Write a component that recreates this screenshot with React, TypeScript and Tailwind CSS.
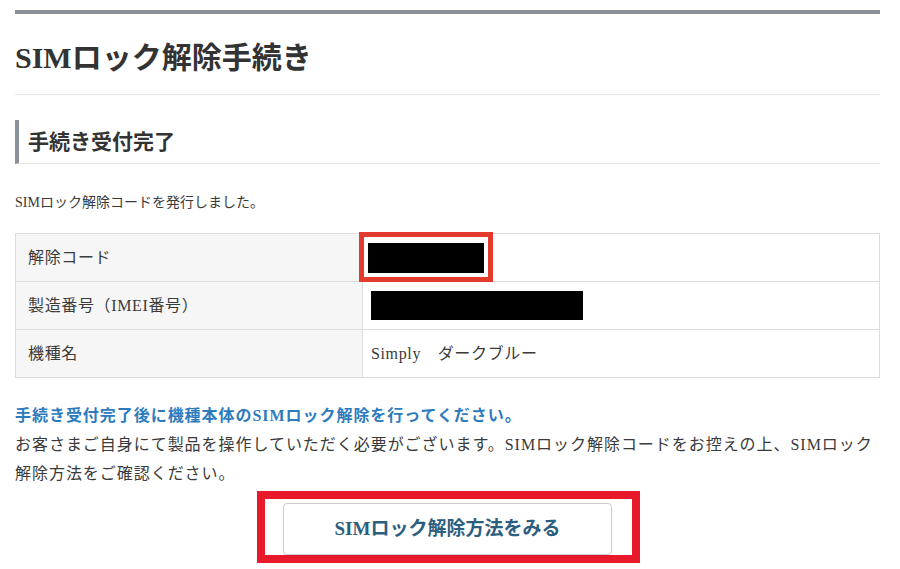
import React from 'react';

const rows = [
  { label: '解除コード', kind: 'code' },
  { label: '製造番号（IMEI番号）', kind: 'imei' },
  { label: '機種名', kind: 'text', value: 'Simply　ダークブルー' },
];

export default function App() {
  return (
    <div className="min-h-[569px] bg-white font-['Liberation_Serif','Noto_Sans_CJK_JP',serif] text-[#3a3a3a]">
      <div className="ml-[15px] w-[865px] pt-[10px]">
        {/* top rule */}
        <div className="h-[4px] bg-[#8b9198]" />

        {/* page title */}
        <h1 className="flex h-[81px] items-center border-b border-[#e5e5e5] pt-[6px] text-[30px] font-bold text-[#333]">
          SIMロック解除手続き
        </h1>

        {/* section heading */}
        <h2 className="mt-[25px] flex h-[44px] items-center border-b border-l-4 border-b-[#e2e2e2] border-l-[#8b9198] pl-[9px] pt-[3px] text-[21px] font-bold text-[#333]">
          手続き受付完了
        </h2>

        <p className="mt-[29px] text-[14px] leading-[20px]">SIMロック解除コードを発行しました。</p>

        {/* result table */}
        <table className="mt-[20px] w-full border-collapse text-[16px] tracking-[0.04em]">
          <tbody>
            {rows.map(row => (
              <tr key={row.label} className="h-[48px]">
                <td className="w-[347px] border border-[#dddddd] bg-[#f6f6f6] pl-[12px]">{row.label}</td>
                <td className="relative border border-[#dddddd] pl-[8px]">
                  {row.kind === 'code' && (
                    <>
                      <div className="ml-[-3px] h-[30px] w-[116px] bg-black" />
                      <div className="absolute left-[-4px] top-[-2px] h-[50px] w-[134px] border-[5px] border-[#e23a2c]" />
                    </>
                  )}
                  {row.kind === 'imei' && <div className="h-[29px] w-[212px] bg-black" />}
                  {row.kind === 'text' && <span>{row.value}</span>}
                </td>
              </tr>
            ))}
          </tbody>
        </table>

        {/* notes */}
        <div className="mt-[23px] text-[16px] leading-[29px] tracking-[0.06em]">
          <p className="font-bold text-[#2d7bbd]">手続き受付完了後に機種本体のSIMロック解除を行ってください。</p>
          <p className="whitespace-nowrap">
            お客さまご自身にて製品を操作していただく必要がございます。SIMロック解除コードをお控えの上、SIMロック
            <br />
            解除方法をご確認ください。
          </p>
        </div>

        {/* button with highlight */}
        <div className="ml-[242px] mt-[3px] h-[72px] w-[383px] border-[8px] border-[#e8192b] pl-[18px] pt-[4px]">
          <button className="flex h-[52px] w-[329px] items-center justify-center rounded-[4px] border border-[#cfcfcf] bg-white text-[19px] font-bold text-[#2c5e80] shadow-[0_1px_2px_rgba(0,0,0,0.08)]">
            SIMロック解除方法をみる
          </button>
        </div>
      </div>
    </div>
  );
}
